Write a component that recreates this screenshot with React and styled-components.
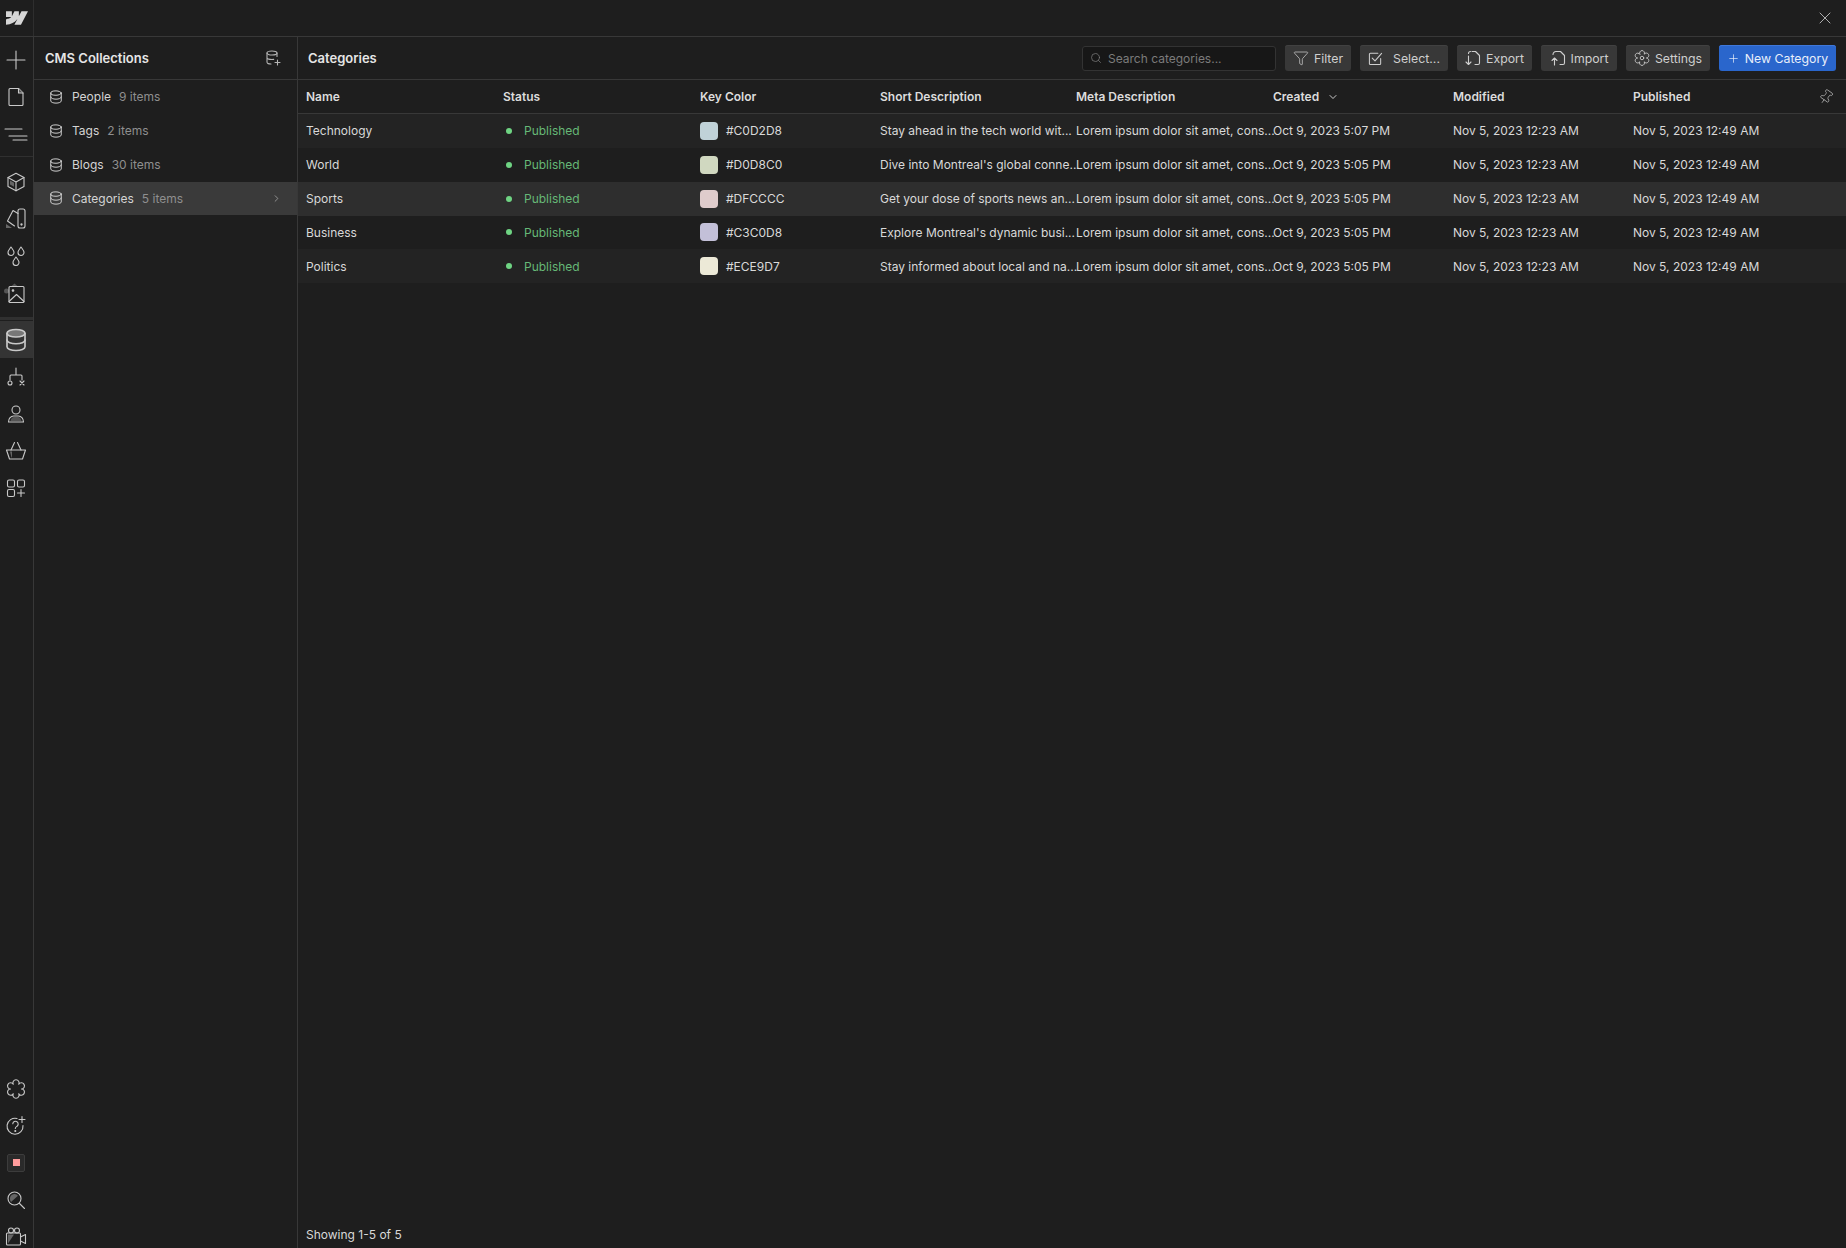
import React from "react";
import styled, { createGlobalStyle } from "styled-components";
import { ChevronDown, ChevronRight, Funnel, Pin, Plus, Search, X } from "lucide-react";

const GlobalStyle = createGlobalStyle`
  html, body {
    margin: 0;
    padding: 0;
    background: #1e1e1e;
  }
  * {
    box-sizing: border-box;
  }
`;

const Page = styled.div`
  width: 1846px;
  height: 1248px;
  display: flex;
  flex-direction: column;
  overflow: hidden;
  background: #1e1e1e;
  color: #d9d9d9;
  font-family: Inter, "Noto Sans", sans-serif;
  font-size: 12px;
`;

const TopBar = styled.header`
  flex: 0 0 37px;
  display: flex;
  align-items: center;
  justify-content: space-between;
  border-bottom: 1px solid #383838;
`;

const LogoCell = styled.div`
  width: 34px;
  height: 100%;
  display: flex;
  align-items: center;
  justify-content: center;
  color: #d6d6d6;
  border-right: 1px solid #2e2e2e;
`;

const CloseButton = styled.div`
  display: flex;
  margin-right: 11px;
  color: #bdbdbd;
`;

const Body = styled.div`
  flex: 1;
  min-height: 0;
  display: flex;
`;

const Rail = styled.nav`
  flex: 0 0 34px;
  display: flex;
  flex-direction: column;
  border-right: 1px solid #383838;
`;

const RailGroup = styled.div`
  display: flex;
  flex-direction: column;
  padding-top: ${(p) => p.$top || 0}px;
  padding-bottom: ${(p) => p.$bottom || 0}px;
  border-bottom: ${(p) => p.$rule || 0}px solid #303030;
  margin-top: ${(p) => (p.$end ? "auto" : "0")};
  margin-bottom: ${(p) => (p.$end ? "-7px" : "0")};
`;

const RailButton = styled.div`
  height: 37px;
  display: flex;
  align-items: center;
  justify-content: center;
  padding-right: 1px;
  color: #c9c9c9;
  background: ${(p) => (p.$active ? "#343434" : "transparent")};
`;

const RecordBox = styled.div`
  width: 18px;
  height: 18px;
  display: flex;
  align-items: center;
  justify-content: center;
  background: #2a2a2a;
  border: 1px solid #3c3c3c;
  border-radius: 2px;
`;

const RecordDot = styled.div`
  width: 7px;
  height: 7px;
  background: #ff9c9c;
`;

const Panel = styled.aside`
  flex: 0 0 264px;
  display: flex;
  flex-direction: column;
  border-right: 1px solid #383838;
`;

const PanelHeader = styled.div`
  height: 43px;
  display: flex;
  align-items: center;
  justify-content: space-between;
  padding: 0 16px 0 11px;
  border-bottom: 1px solid #383838;
  color: #e6e6e6;
  font-weight: 600;
  font-size: 13px;
`;

const PanelIcon = styled.div`
  display: flex;
  color: #b5b5b5;
`;

const CollectionList = styled.ul`
  list-style: none;
  margin: 0;
  padding: 0;
`;

const CollectionRow = styled.li`
  height: 33.85px;
  display: flex;
  align-items: center;
  padding: 0 15px;
  background: ${(p) => (p.$active ? "#3a3a3a" : "transparent")};
  color: #d4d4d4;
`;

const CollectionName = styled.span`
  margin-left: 9px;
`;

const CollectionCount = styled.span`
  margin-left: 8px;
  color: #8f8f8f;
`;

const RowChevron = styled.span`
  display: flex;
  margin-left: auto;
  color: #b5b5b5;
`;

const Main = styled.main`
  flex: 1;
  min-width: 0;
  display: flex;
  flex-direction: column;
`;

const Toolbar = styled.div`
  height: 43px;
  display: flex;
  align-items: center;
  gap: 9px;
  padding: 0 10px;
  border-bottom: 1px solid #383838;
`;

const Title = styled.h1`
  margin: 0 auto 0 0;
  color: #e6e6e6;
  font-size: 13px;
  font-weight: 600;
`;

const SearchBox = styled.div`
  width: 194px;
  height: 25px;
  display: flex;
  align-items: center;
  gap: 6px;
  padding: 0 7px;
  background: #171717;
  border: 1px solid #333333;
  border-radius: 3px;
  color: #7b7b7b;
`;

const ToolButton = styled.div`
  height: 26px;
  width: ${(p) => p.$width}px;
  display: flex;
  align-items: center;
  justify-content: center;
  gap: ${(p) => p.$gap || 5}px;
  background: ${(p) => (p.$primary ? "#2a66cc" : "#383838")};
  border-radius: 3px;
  font-size: 12.3px;
  color: ${(p) => (p.$primary ? "#e8effa" : "#cfcfcf")};
  box-shadow: inset 0 1px 0 ${(p) => (p.$primary ? "#3f78da" : "#414141")};
`;

const grid = `
  display: grid;
  grid-template-columns: 197px 197px 180px 196px 197px 180px 180px 1fr auto;
  align-items: center;
  padding-left: 8px;
`;

const HeadRow = styled.div`
  ${grid}
  height: 34px;
  border-bottom: 1px solid #383838;
  color: #dcdcdc;
  font-weight: 600;
`;

const HeadCell = styled.div`
  display: flex;
  align-items: center;
  gap: 8px;
`;

const PinCell = styled.div`
  display: flex;
  padding-right: 12px;
  color: #ababab;
`;

const Row = styled.div`
  ${grid}
  height: 33.85px;
  background: ${(p) => (p.$hover ? "#2e2e2e" : p.$alt ? "#232323" : "transparent")};
`;

const Cell = styled.div`
  white-space: nowrap;
`;

const StatusCell = styled.div`
  display: flex;
  align-items: center;
  gap: 12px;
  padding-left: 3px;
  color: #66b877;
`;

const StatusDot = styled.span`
  width: 6px;
  height: 6px;
  border-radius: 50%;
  background: #6fd483;
`;

const ColorCell = styled.div`
  display: flex;
  align-items: center;
  gap: 8px;
`;

const Swatch = styled.span`
  width: 18px;
  height: 18px;
  border-radius: 4px;
  background: ${(p) => p.$color};
`;

const Footer = styled.div`
  margin-top: auto;
  padding: 0 8px;
  height: 28px;
  display: flex;
  align-items: center;
`;

const Svg = ({ size = 18, box = 20, children }) => (
  <svg
    width={size}
    height={size}
    viewBox={`0 0 ${box} ${box}`}
    fill="none"
    stroke="currentColor"
    strokeWidth="1.1"
    strokeLinecap="round"
    strokeLinejoin="round"
  >
    {children}
  </svg>
);

const WebflowLogo = () => (
  <svg width="22" height="22" viewBox="0 0 24 24" fill="currentColor">
    <path d="M24 4.515L16.342 19.485H9.149L12.354 13.28H12.21C9.566 16.713 5.621 18.973 0 19.485V13.366s3.596-.213 5.71-2.435H0V4.515h6.417v5.278l.144-.001 2.622-5.277h4.854v5.244h.144l2.72-5.244H24z" />
  </svg>
);

const AddIcon = () => (
  <Svg size={20}>
    <path d="M10 1v18M1 10h18" />
  </Svg>
);

const PageIcon = () => (
  <Svg size={20}>
    <path d="M3 2.5A1 1 0 0 1 4 1.5h8.5L17 6v11.5a1 1 0 0 1-1 1H4a1 1 0 0 1-1-1z" />
    <path d="M12.5 1.5V6H17" fill="#555" />
  </Svg>
);

const NavigatorIcon = () => (
  <Svg size={24} box={24}>
    <path d="M1 7h17M5 14h18M9 18h14" />
  </Svg>
);

const CubeIcon = () => (
  <Svg size={20}>
    <path d="M10 1.2l8 4.4v8.8l-8 4.4-8-4.4V5.6z" />
    <path d="M2 5.6l8 4.4 8-4.4M10 10v8.8" />
    <path d="M4 8.5l4 2.2v4L4 12.5z" fill="#666" stroke="none" />
  </Svg>
);

const SwatchIcon = () => (
  <Svg size={22} box={22}>
    <path d="M1 20v-4l6 4z" fill="#666" stroke="none" />
    <path d="M13 5.5L8 2.5 2.5 13l7 5" />
    <rect x="13" y="1" width="7" height="19" rx="2" />
    <circle cx="16.5" cy="16.5" r=".6" fill="currentColor" />
  </Svg>
);

const Drop = ({ x, y }) => (
  <path
    transform={`translate(${x} ${y})`}
    d="M4 0C2.6 2 1 3.6 1 5.5a3 3 0 0 0 6 0C7 3.6 5.4 2 4 0z"
  />
);

const DropsIcon = () => (
  <Svg size={20}>
    <Drop x={1} y={1} />
    <Drop x={11} y={1} />
    <Drop x={6} y={11} />
  </Svg>
);

const ImageIcon = () => (
  <Svg size={24} box={24}>
    <circle cx="2.500" cy="10" r="2.500" fill="#555" stroke="none" />
    <path d="M7 5.500l3.500-3 3.500 3z" fill="#555" stroke="none" />
    <rect x="5" y="5.500" width="15" height="16" rx="1" />
    <path d="M5 20.500l7.500-7 7.500 7" />
    <circle cx="9" cy="9.500" r=".8" fill="currentColor" />
  </Svg>
);

const DatabaseIcon = ({ size = 14, shaded }) => (
  <Svg size={size} box={16}>
    <ellipse cx="8" cy="3.5" rx="6" ry="2.5" fill={shaded ? "#777" : "none"} />
    <path d="M2 3.5v9c0 1.4 2.7 2.5 6 2.5s6-1.1 6-2.5v-9" />
    <path d="M2 8c0 1.4 2.7 2.5 6 2.5S14 9.400 14 8" />
  </Svg>
);

const AddDatabaseIcon = () => (
  <Svg size={16} box={16}>
    <ellipse cx="7" cy="3" rx="5" ry="2" />
    <path d="M2 3v9c0 1.100 2 2 4 2M12 3v3.500M2 7.500c0 1.100 2.200 2 5 2 .6 0 1.200 0 1.700-.1" />
    <path d="M12.500 10v5M10 12.500h5" />
  </Svg>
);

const LogicIcon = () => (
  <Svg size={20}>
    <path d="M10 1v7M4 13V9a1 1 0 0 1 1-1h10a1 1 0 0 1 1 1v4" />
    <circle cx="4" cy="16" r="2" />
    <path d="M14 14l4 4M18 14l-4 4" />
  </Svg>
);

const UserIcon = () => (
  <Svg size={20}>
    <circle cx="10" cy="6" r="4" />
    <path d="M2.500 18c0-3.500 2.500-6 5-6h5c2.500 0 5 2.500 5 6z" />
    <path d="M4.500 17c.3-2 1.500-3.500 3-4h5c1.500.5 2.700 2 3 4z" fill="#555" stroke="none" />
  </Svg>
);

const BasketIcon = () => (
  <Svg size={22} box={22}>
    <path d="M1.500 10h19l-3 9h-13z" />
    <path d="M6 10l3.500-7.500M16 10L12.500 2.500" />
    <path d="M5 11.500h2v6H6.500z" fill="#666" stroke="none" />
  </Svg>
);

const AppsIcon = () => (
  <Svg size={20}>
    <rect x="1.500" y="2" width="7" height="7" rx="1.500" />
    <rect x="11.500" y="2" width="7" height="7" rx="1.500" />
    <rect x="1.500" y="11.500" width="7" height="7" rx="1.500" />
    <path d="M15 11.500v7M11.500 15h7" />
  </Svg>
);

const GearIcon = ({ size = 20, hub }) => (
  <Svg size={size}>
    <path d="M7.250 5.240A3.100 3.100 0 1 1 12.750 5.240A3.100 3.100 0 1 1 15.500 10A3.100 3.100 0 1 1 12.750 14.760A3.100 3.100 0 1 1 7.250 14.760A3.100 3.100 0 1 1 4.500 10A3.100 3.100 0 1 1 7.250 5.240z" />
    {hub && <circle cx="10" cy="10" r="2.200" />}
  </Svg>
);

const HelpIcon = () => (
  <Svg size={22} box={22}>
    <path d="M12 3.500a8 8 0 1 0 6 7" />
    <path d="M7.800 8.800a2.700 2.700 0 1 1 4 2.600c-1 .6-1.500 1-1.500 2.100" />
    <circle cx="10.300" cy="16" r=".5" fill="currentColor" />
    <path d="M17 1.500v6M14 4.500h6" />
  </Svg>
);

const LensIcon = () => (
  <Svg size={20}>
    <circle cx="8.500" cy="8.500" r="6.500" />
    <path d="M4 8.500a4.500 4.500 0 0 1 8-2.800L5 12a4.500 4.500 0 0 1-1-3.500z" fill="#666" stroke="none" />
    <path d="M13.500 13.500l5 5" />
  </Svg>
);

const CameraIcon = () => (
  <Svg size={22} box={22}>
    <circle cx="6" cy="4.500" r="2.500" />
    <circle cx="12" cy="4.500" r="2.500" />
    <rect x="1.500" y="7" width="14" height="12" rx="1" />
    <path d="M3 17.500l6-9H3z" fill="#666" stroke="none" />
    <path d="M15.500 11l5-2.500v9l-5-2.500" />
  </Svg>
);

const CheckBoxIcon = () => (
  <Svg size={15} box={16}>
    <path d="M13.500 8v5.500a1 1 0 0 1-1 1h-10a1 1 0 0 1-1-1v-10a1 1 0 0 1 1-1h8" />
    <path d="M4.500 7.500l3 3L14.500 2.500" />
  </Svg>
);

const ExportIcon = () => (
  <Svg size={16} box={16}>
    <path d="M7 1.500h3.500l4 4V13a1.500 1.500 0 0 1-1.500 1.500h-3" />
    <path d="M3.500 6v8.500M1 12l2.500 2.500L6 12" />
    <path d="M3.500 3.500c0-1.300.8-2 2-2" />
  </Svg>
);

const ImportIcon = () => (
  <Svg size={16} box={16}>
    <path d="M3 4.500a3 3 0 0 1 3-3h4.500l4 4V13a1.500 1.500 0 0 1-1.500 1.500h-3" />
    <path d="M4.500 15V8M2 10.500L4.500 8 7 10.500" />
  </Svg>
);

const collections = [
  { name: "People", count: "9 items" },
  { name: "Tags", count: "2 items" },
  { name: "Blogs", count: "30 items" },
  { name: "Categories", count: "5 items", active: true },
];

const META = "Lorem ipsum dolor sit amet, cons...";

const categories = [
  {
    name: "Technology",
    color: "#C0D2D8",
    text: "Stay ahead in the tech world wit...",
    created: "Oct 9, 2023 5:07 PM",
    alt: true,
  },
  {
    name: "World",
    color: "#D0D8C0",
    text: "Dive into Montreal's global conne...",
    created: "Oct 9, 2023 5:05 PM",
  },
  {
    name: "Sports",
    color: "#DFCCCC",
    text: "Get your dose of sports news an...",
    created: "Oct 9, 2023 5:05 PM",
    hover: true,
  },
  {
    name: "Business",
    color: "#C3C0D8",
    text: "Explore Montreal's dynamic busi...",
    created: "Oct 9, 2023 5:05 PM",
  },
  {
    name: "Politics",
    color: "#ECE9D7",
    text: "Stay informed about local and na...",
    created: "Oct 9, 2023 5:05 PM",
    alt: true,
  },
];

const App = () => (
  <Page>
    <GlobalStyle />
    <TopBar>
      <LogoCell>
        <WebflowLogo />
      </LogoCell>
      <CloseButton>
        <X size={20} strokeWidth={1.1} />
      </CloseButton>
    </TopBar>
    <Body>
      <Rail>
        <RailGroup $top={4} $bottom={4} $rule={1}>
          <RailButton><AddIcon /></RailButton>
          <RailButton><PageIcon /></RailButton>
          <RailButton><NavigatorIcon /></RailButton>
        </RailGroup>
        <RailGroup $top={6} $bottom={6} $rule={3}>
          <RailButton><CubeIcon /></RailButton>
          <RailButton><SwatchIcon /></RailButton>
          <RailButton><DropsIcon /></RailButton>
          <RailButton><ImageIcon /></RailButton>
        </RailGroup>
        <RailGroup $top={1}>
          <RailButton $active><DatabaseIcon size={24} shaded /></RailButton>
          <RailButton><LogicIcon /></RailButton>
          <RailButton><UserIcon /></RailButton>
          <RailButton><BasketIcon /></RailButton>
          <RailButton><AppsIcon /></RailButton>
        </RailGroup>
        <RailGroup $end>
          <RailButton><GearIcon /></RailButton>
          <RailButton><HelpIcon /></RailButton>
          <RailButton><RecordBox><RecordDot /></RecordBox></RailButton>
          <RailButton><LensIcon /></RailButton>
          <RailButton><CameraIcon /></RailButton>
        </RailGroup>
      </Rail>
      <Panel>
        <PanelHeader>
          CMS Collections
          <PanelIcon><AddDatabaseIcon /></PanelIcon>
        </PanelHeader>
        <CollectionList>
          {collections.map((item) => (
            <CollectionRow key={item.name} $active={item.active}>
              <DatabaseIcon />
              <CollectionName>{item.name}</CollectionName>
              <CollectionCount>{item.count}</CollectionCount>
              {item.active && (
                <RowChevron><ChevronRight size={11} strokeWidth={1.5} /></RowChevron>
              )}
            </CollectionRow>
          ))}
        </CollectionList>
      </Panel>
      <Main>
        <Toolbar>
          <Title>Categories</Title>
          <SearchBox>
            <Search size={12} strokeWidth={1.5} />
            Search categories...
          </SearchBox>
          <ToolButton $width={66}>
            <Funnel size={16} strokeWidth={1.1} />
            Filter
          </ToolButton>
          <ToolButton $width={88} $gap={10}>
            <CheckBoxIcon />
            Select...
          </ToolButton>
          <ToolButton $width={75}>
            <ExportIcon />
            Export
          </ToolButton>
          <ToolButton $width={76}>
            <ImportIcon />
            Import
          </ToolButton>
          <ToolButton $width={84}>
            <GearIcon size={16} hub />
            Settings
          </ToolButton>
          <ToolButton $width={117} $primary>
            <Plus size={13} strokeWidth={1.3} />
            New Category
          </ToolButton>
        </Toolbar>
        <HeadRow>
          <HeadCell>Name</HeadCell>
          <HeadCell>Status</HeadCell>
          <HeadCell>Key Color</HeadCell>
          <HeadCell>Short Description</HeadCell>
          <HeadCell>Meta Description</HeadCell>
          <HeadCell>
            Created
            <ChevronDown size={12} strokeWidth={1.8} />
          </HeadCell>
          <HeadCell>Modified</HeadCell>
          <HeadCell>Published</HeadCell>
          <PinCell>
            <Pin size={16} strokeWidth={1.2} transform="rotate(35)" />
          </PinCell>
        </HeadRow>
        {categories.map((item) => (
          <Row key={item.name} $alt={item.alt} $hover={item.hover}>
            <Cell>{item.name}</Cell>
            <StatusCell>
              <StatusDot />
              Published
            </StatusCell>
            <ColorCell>
              <Swatch $color={item.color} />
              {item.color}
            </ColorCell>
            <Cell>{item.text}</Cell>
            <Cell>{META}</Cell>
            <Cell>{item.created}</Cell>
            <Cell>Nov 5, 2023 12:23 AM</Cell>
            <Cell>Nov 5, 2023 12:49 AM</Cell>
          </Row>
        ))}
        <Footer>Showing 1-5 of 5</Footer>
      </Main>
    </Body>
  </Page>
);

export default App;
